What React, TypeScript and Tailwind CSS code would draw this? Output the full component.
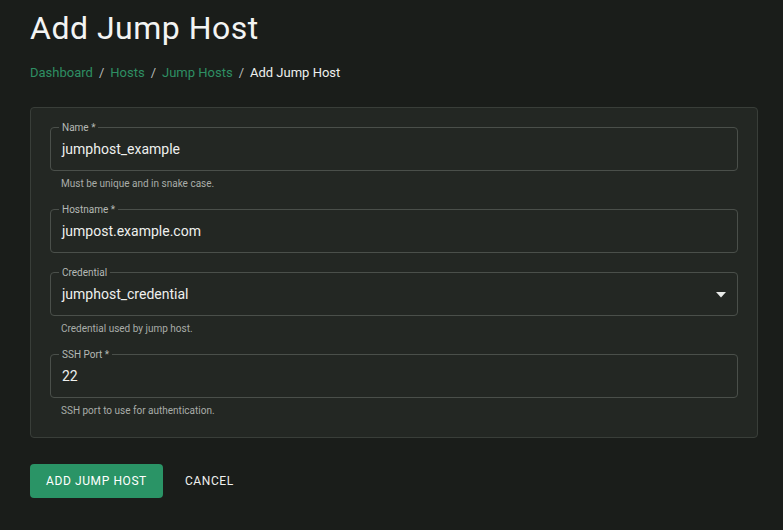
import React from 'react';

const Field: React.FC<{ label: string; value: string; help?: string; select?: boolean }> = ({ label, value, help, select }) => (
    <div>
        <fieldset className="border border-[#4a4f4a] rounded px-[11px] h-[49px] -mt-[6px] flex items-center">
            <legend className="px-[3px] -ml-[3px] text-[10px] leading-[12px] text-[#b5b9b5]">{label}</legend>
            <span className="flex-1 text-[14px] text-[#eef0ee] -mt-[4px]">{value}</span>
            {select && (
                <svg width="10" height="6" viewBox="0 0 10 6" className="-mt-[4px]">
                    <path d="M0 0h10L5 5.5z" fill="#e8eae8" />
                </svg>
            )}
        </fieldset>
        {help && <p className="text-[10px] text-[#a9ada9] px-[11px] mt-[7px] leading-[12px]">{help}</p>}
    </div>
);

export default function App() {
    return (
        <div className="min-h-[530px] bg-[#1a1d1a] px-[30px] pt-[8px] text-white" style={{ fontFamily: 'Roboto, "Noto Sans", sans-serif' }}>
            <h1 className="text-[32px] leading-[40px] tracking-[0.5px] text-[#f3f4f3]">Add Jump Host</h1>
            <nav className="mt-[15px] text-[13px] flex gap-[6px] text-[#b8bcb8]">
                <span className="text-[#2e8f63]">Dashboard</span><span>/</span>
                <span className="text-[#2e8f63]">Hosts</span><span>/</span>
                <span className="text-[#2e8f63]">Jump Hosts</span><span>/</span>
                <span className="text-[#eef0ee]">Add Jump Host</span>
            </nav>
            <div className="mt-[24px] border border-[#393e39] rounded bg-[#232723] px-[19px] pt-[20px] pb-[20px] flex flex-col gap-[20px] w-[728px]">
                <Field label="Name *" value="jumphost_example" help="Must be unique and in snake case." />
                <Field label="Hostname *" value="jumpost.example.com" />
                <Field label="Credential" value="jumphost_credential" help="Credential used by jump host." select />
                <Field label="SSH Port *" value="22" help="SSH port to use for authentication." />
            </div>
            <div className="mt-[26px] flex items-center gap-[8px]">
                <button className="h-[34px] px-[16px] rounded bg-[#2a9466] text-[12px] tracking-[0.6px] text-white">ADD JUMP HOST</button>
                <button className="h-[34px] px-[14px] text-[12px] tracking-[0.6px] text-[#eef0ee]">CANCEL</button>
            </div>
        </div>
    );
}
